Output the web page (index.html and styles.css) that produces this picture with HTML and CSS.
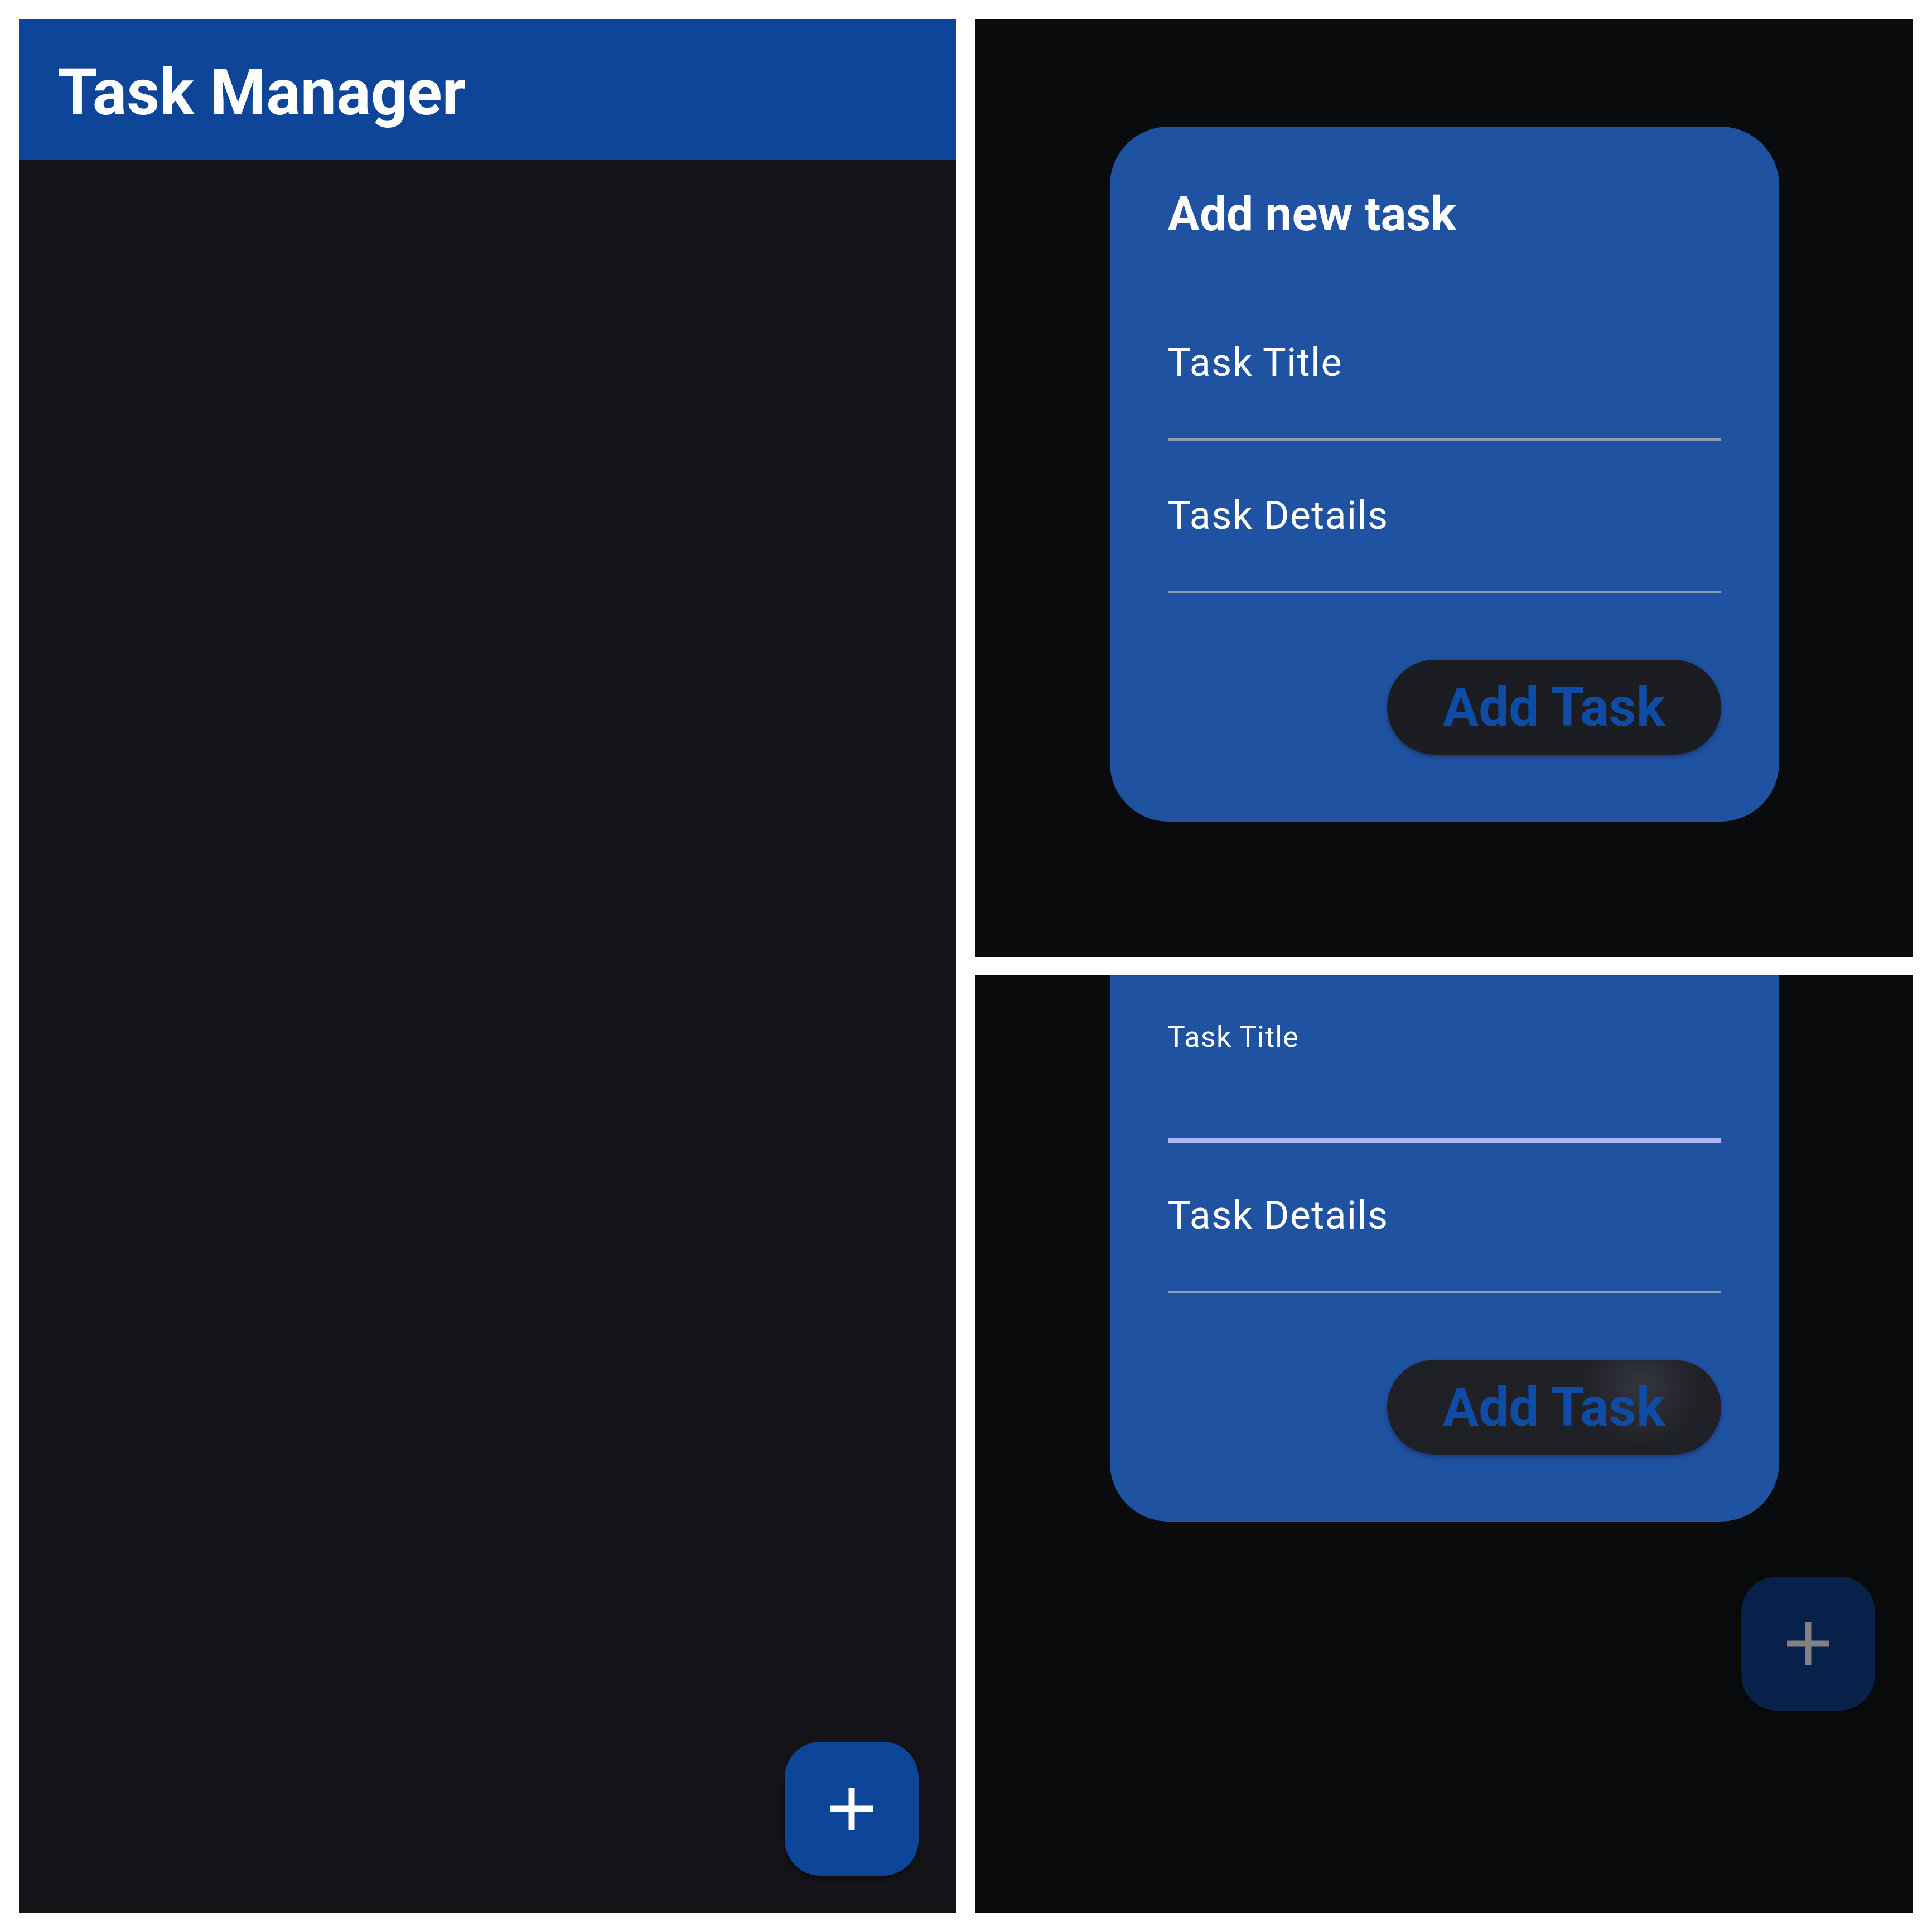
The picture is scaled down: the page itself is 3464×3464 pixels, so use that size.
FILE: index.html
```html
<!DOCTYPE html>
<html lang="en">
<head>
<meta charset="utf-8">
<title>Task Manager</title>
<link rel="stylesheet" href="styles.css">
</head>
<body>
<div class="collage">
  <section class="screen screen-main">
    <header class="appbar"><h1 class="appbar-title">Task Manager</h1></header>
    <main class="task-list">
      <button class="fab" aria-label="Add task">
        <svg viewBox="0 0 76 76" aria-hidden="true"><path d="M38 0V76M0 38H76" stroke="#ffffff" stroke-width="11" fill="none"/></svg>
      </button>
    </main>
  </section>

  <section class="screen screen-dialog">
    <div class="dialog">
      <h2 class="dialog-title">Add new task</h2>
      <div class="field"><span class="field-label">Task Title</span></div>
      <div class="field"><span class="field-label">Task Details</span></div>
      <div class="dialog-actions"><button class="btn-add">Add Task</button></div>
    </div>
  </section>

  <section class="screen screen-dialog screen-focused">
    <div class="dialog dialog-scrolled">
      <div class="field field-focused"><span class="field-label field-label-floating">Task Title</span></div>
      <div class="field"><span class="field-label">Task Details</span></div>
      <div class="dialog-actions"><button class="btn-add btn-pressed">Add Task</button></div>
    </div>
    <button class="fab fab-dimmed" aria-label="Add task">
      <svg viewBox="0 0 76 76" aria-hidden="true"><path d="M38 0V76M0 38H76" stroke="#808182" stroke-width="11" fill="none"/></svg>
    </button>
  </section>
</div>
</body>
</html>
```

FILE: styles.css
```css
* { box-sizing: border-box; margin: 0; padding: 0; }

html, body { background: #ffffff; }

body {
  font-family: Roboto, "Noto Sans", "Liberation Sans", sans-serif;
  width: 3464px;
  height: 3464px;
  overflow: hidden;
}

.collage {
  display: grid;
  grid-template-columns: 1680px 1681px;
  grid-template-rows: 1681px 1681px;
  column-gap: 35px;
  row-gap: 34px;
  padding: 34px 0 0 34px;
}

.screen { overflow: hidden; }

/* ---------- main screen ---------- */
.screen-main {
  grid-row: 1 / 3;
  background: #141419;
  display: flex;
  flex-direction: column;
}

.appbar {
  height: 253px;
  background: #0e4598;
  padding: 74px 0 0 69px;
}

.appbar-title {
  font-size: 115px;
  line-height: 1;
  font-weight: 700;
  color: #ffffff;
}

.task-list {
  flex: 1;
  display: flex;
  flex-direction: column;
  justify-content: flex-end;
  align-items: flex-end;
  padding: 0 67px 67px 0;
}

.fab {
  width: 240px;
  height: 240px;
  border-radius: 64px;
  border: 0;
  background: #0d4599;
  display: flex;
  align-items: center;
  justify-content: center;
  box-shadow: 0 6px 14px rgba(0, 0, 0, 0.35);
  flex-shrink: 0;
}

.fab svg { width: 76px; height: 76px; display: block; }

/* ---------- dialog screens ---------- */
.screen-dialog {
  background: #0a0b0d;
  display: flex;
  flex-direction: column;
  align-items: center;
  padding-top: 193px;
}

.dialog {
  width: 1200px;
  flex-shrink: 0;
  background: #2052a2;
  border-radius: 105px;
  padding: 115px 104px 120px;
}

.dialog-title {
  font-size: 85.5px;
  line-height: 1;
  font-weight: 700;
  color: #ffffff;
  margin-bottom: 88px;
}

.field {
  padding: 99px 0 101px;
  border-bottom: 4px solid #8e9cb9;
}

.field-label {
  display: block;
  font-size: 70px;
  line-height: 1;
  color: #ffffff;
  letter-spacing: 1.4px;
}

.field-focused {
  padding: 62px 0 155.5px;
  border-bottom-color: #aab7f5;
  box-shadow: 0 4px 0 #aab7f5;
}

.field-label-floating {
  font-size: 52.5px;
  letter-spacing: 1.1px;
}

.dialog-actions {
  display: flex;
  justify-content: flex-end;
  margin-top: 119px;
}

.btn-add {
  width: 599px;
  height: 170px;
  border-radius: 85px;
  border: 0;
  background: #1c1d22;
  color: #0e4ca6;
  font-family: inherit;
  font-weight: 700;
  font-size: 96px;
  line-height: 1;
  box-shadow: 0 4px 8px rgba(0, 0, 0, 0.3);
}

.btn-pressed {
  background:
    radial-gradient(circle at 76% 28%, rgba(200, 210, 235, 0.12) 0, rgba(200, 210, 235, 0.05) 60px, rgba(200, 210, 235, 0) 110px),
    #202127;
}

/* ---------- focused (scrolled) screen ---------- */
.screen-focused { padding-top: 0; }

/* dialog scrolled so its title sits above the visible area */
.dialog-scrolled { margin-top: -267px; padding-top: 288.5px; }

.fab-dimmed {
  align-self: flex-end;
  margin: 99px 68px 0 0;
  background: #07214a;
  box-shadow: 0 6px 14px rgba(0, 0, 0, 0.4);
}
```
